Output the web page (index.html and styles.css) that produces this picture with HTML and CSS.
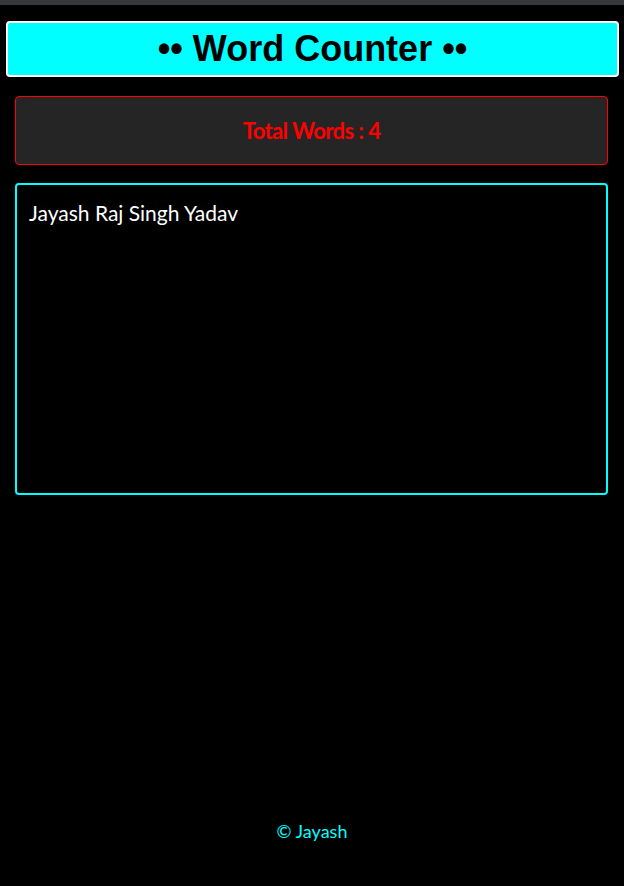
FILE: index.html
```html
<!DOCTYPE html>
<html>
<head>
<meta charset="utf-8">
<link rel="stylesheet" href="styles.css">
</head>
<body>
<div class="topbar"></div>
<header class="title">•• Word Counter ••</header>
<main class="content">
  <div class="counter">Total Words : 4</div>
  <textarea class="editor">Jayash Raj Singh Yadav</textarea>
</main>
<footer class="footer">© Jayash</footer>
</body>
</html>
```
FILE: styles.css
```css
html, body {
  margin: 0;
  padding: 0;
  background: #000;
  height: 100%;
}
body {
  display: flex;
  flex-direction: column;
  font-family: "Lato", "Open Sans", sans-serif;
}
.topbar {
  height: 5px;
  background: #36373a;
}
.title {
  margin: 16px 5px 0 6px;
  height: 52px;
  background: #00ffff;
  border: 2px solid #fff;
  border-radius: 4px;
  display: flex;
  align-items: center;
  justify-content: center;
  font-family: "Liberation Sans", Arial, sans-serif;
  font-weight: bold;
  font-size: 36px;
  color: #000;
}
.content {
  padding: 19px 16px 0 15px;
  display: flex;
  flex-direction: column;
  gap: 18px;
}
.counter {
  box-sizing: border-box;
  height: 69px;
  background: #252525;
  border: 1px solid #ff0000;
  border-radius: 4px;
  display: flex;
  align-items: center;
  justify-content: center;
  color: #ff0000;
  font-weight: bold;
  font-size: 22px;
  letter-spacing: -0.6px;
}
.editor {
  display: block;
  box-sizing: border-box;
  width: 100%;
  height: 312px;
  background: #000;
  border: 2px solid #00ffff;
  border-radius: 4px;
  color: #fff;
  font-family: "Lato", "Open Sans", sans-serif;
  font-size: 21px;
  padding: 15px 12px;
  resize: none;
  outline: none;
}
.footer {
  margin-top: auto;
  padding-bottom: 44px;
  text-align: center;
  color: #00ffff;
  font-size: 18px;
}
```
